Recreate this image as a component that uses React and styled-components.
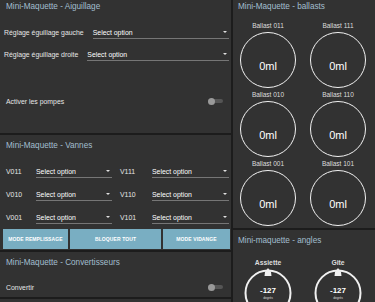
import React from "react";
import styled, { createGlobalStyle } from "styled-components";

const Global = createGlobalStyle`
  html, body { margin: 0; padding: 0; background: #1c1c1c; }
  body { font-family: "Liberation Sans", Arial, sans-serif; }
`;

const Page = styled.div`
  width: 375px;
  height: 302px;
  overflow: hidden;
  background: #1c1c1c;
`;

const Columns = styled.div`
  display: flex;
  gap: 2px;
  margin-top: -4px;
  height: 306px;
`;

const Column = styled.div`
  display: flex;
  flex-direction: column;
  gap: 2px;
  width: ${(p) => (p.$w ? `${p.$w}px` : "auto")};
  flex: ${(p) => (p.$w ? "none" : "1")};
`;

const Card = styled.section`
  background: #323232;
  padding: 5px 0 ${(p) => p.$pb || 0}px;
  box-sizing: border-box;
  height: ${(p) => (p.$h ? `${p.$h}px` : "auto")};
  flex: ${(p) => (p.$grow ? "1" : "none")};
`;

const Title = styled.div`
  font-size: 8.2px;
  line-height: 12px;
  color: #a2bfcf;
  padding-left: ${(p) => p.$pl || 6}px;
  white-space: nowrap;
`;

const FieldRow = styled.div`
  display: flex;
  align-items: center;
  height: 14px;
  margin-top: ${(p) => p.$mt || 0}px;
  padding: 0 2px 0 ${(p) => p.$pl || 4}px;
`;

const Label = styled.span`
  font-size: 6.9px;
  color: #e6e6e6;
  white-space: nowrap;
  box-sizing: border-box;
  width: ${(p) => (p.$w ? `${p.$w}px` : "auto")};
  padding-left: ${(p) => p.$pl || 0}px;
  flex: none;
`;

const SelectBox = styled.div`
  display: flex;
  align-items: center;
  justify-content: space-between;
  box-sizing: border-box;
  height: 14px;
  margin-left: ${(p) => p.$ml || 0}px;
  width: ${(p) => (p.$w ? `${p.$w}px` : "auto")};
  flex: ${(p) => (p.$w ? "none" : "1")};
  border-bottom: 1.5px solid #767676;
  font-size: 6.9px;
  color: #ffffff;
  padding-top: 1px;
`;

const Arrow = styled.span`
  width: 0;
  height: 0;
  border-left: 2px solid transparent;
  border-right: 2px solid transparent;
  border-top: 2.5px solid #e0e0e0;
  margin-right: 2px;
`;

const SwitchRow = styled.div`
  display: flex;
  align-items: center;
  justify-content: space-between;
  height: 14px;
  margin-top: ${(p) => p.$mt || 0}px;
  padding: 0 8px 0 6px;
`;

const Track = styled.div`
  width: 15px;
  height: 4px;
  border-radius: 2px;
  background: #555555;
  display: flex;
  align-items: center;
`;

const Knob = styled.div`
  width: 7px;
  height: 7px;
  border-radius: 50%;
  background: #999999;
  flex: none;
`;

const ButtonRow = styled.div`
  display: flex;
  gap: 2px;
  padding-left: 3px;
  margin-top: 5px;
`;

const ActionButton = styled.button`
  width: ${(p) => p.$w}px;
  height: 20px;
  border: none;
  padding: 0;
  background: #79aec2;
  color: #ffffff;
  font-family: "Liberation Sans", Arial, sans-serif;
  font-size: 5px;
  font-weight: 700;
  letter-spacing: 0.1px;
  text-transform: uppercase;
  display: flex;
  align-items: center;
  justify-content: center;
`;

const TwoGrid = styled.div`
  display: grid;
  grid-template-columns: 70px 70px;
  row-gap: 2px;
  margin-top: ${(p) => p.$mt || 0}px;
`;

const Cell = styled.div`
  display: flex;
  flex-direction: column;
  align-items: center;
`;

const SmallLabel = styled.div`
  font-size: ${(p) => p.$fs || 6.5}px;
  font-weight: ${(p) => p.$fw || 400};
  line-height: 10px;
  color: #dddddd;
  white-space: nowrap;
`;

const Ring = styled.div`
  width: 56px;
  height: 56px;
  margin-top: 1px;
  box-sizing: border-box;
  border: 1.5px solid #f2f2f2;
  border-radius: 50%;
  display: flex;
  align-items: center;
  justify-content: center;
  padding-top: 12px;
  font-size: 11px;
  color: #ffffff;
`;

const GaugeSvg = styled.svg`
  display: block;
  overflow: visible;
`;

const Select = ({ w, ml }) => (
  <SelectBox $w={w} $ml={ml}>
    <span>Select option</span>
    <Arrow />
  </SelectBox>
);

const Toggle = () => (
  <Track>
    <Knob />
  </Track>
);

const Gauge = ({ label }) => (
  <Cell>
    <SmallLabel $fs={6.8} $fw={700}>{label}</SmallLabel>
    <GaugeSvg width="56" height="40" viewBox="0 0 56 40">
      <circle cx="28" cy="25" r="22.5" fill="none" stroke="#f0f0f0" strokeWidth="2" />
      <polygon points="28,0 31,4 31.5,8 24.5,8 25,4" fill="#f0f0f0" />
      <text
        x="28"
        y="25"
        textAnchor="middle"
        fill="#ffffff"
        fontSize="8"
        fontWeight="700"
        fontFamily="Liberation Sans, Arial, sans-serif"
      >
        -127
      </text>
      <text
        x="28"
        y="30.5"
        textAnchor="middle"
        fill="#dddddd"
        fontSize="3.2"
        fontFamily="Liberation Sans, Arial, sans-serif"
      >
        degrés
      </text>
    </GaugeSvg>
  </Cell>
);

const valves = [
  ["V011", "V111"],
  ["V010", "V110"],
  ["V001", "V101"],
];

const ballasts = ["011", "111", "010", "110", "001", "101"];

export default function App() {
  return (
    <Page>
      <Global />
      <Columns>
        <Column $w={231}>
          <Card $h={137}>
            <Title>Mini-Maquette - Aiguillage</Title>
            <FieldRow $mt={12}>
              <Label>Réglage éguillage gauche</Label>
              <Select ml={9} />
            </FieldRow>
            <FieldRow $mt={8}>
              <Label>Réglage éguillage droite</Label>
              <Select ml={9} />
            </FieldRow>
            <SwitchRow $mt={33}>
              <Label>Activer les pompes</Label>
              <Toggle />
            </SwitchRow>
          </Card>

          <Card $pb={1}>
            <Title>Mini-Maquette - Vannes</Title>
            {valves.map(([a, b], i) => (
              <FieldRow key={a} $mt={i === 0 ? 12 : 9} $pl={6}>
                <Label $w={30}>{a}</Label>
                <Select w={76} />
                <Label $w={40} $pl={8}>
                  {b}
                </Label>
                <Select w={77} />
              </FieldRow>
            ))}
            <ButtonRow>
              <ActionButton $w={65}>Mode remplissage</ActionButton>
              <ActionButton $w={91}>Bloquer tout</ActionButton>
              <ActionButton $w={67}>Mode vidange</ActionButton>
            </ButtonRow>
          </Card>

          <Card $h={45}>
            <Title>Mini-Maquette - Convertisseurs</Title>
            <SwitchRow $mt={11}>
              <Label>Convertir</Label>
              <Toggle />
            </SwitchRow>
          </Card>

          <Card $grow />
        </Column>

        <Column>
          <Card $pb={2}>
            <Title $pl={5}>Mini-Maquette - ballasts</Title>
            <TwoGrid $mt={8}>
              {ballasts.map((b) => (
                <Cell key={b}>
                  <SmallLabel>Ballast {b}</SmallLabel>
                  <Ring>0ml</Ring>
                </Cell>
              ))}
            </TwoGrid>
          </Card>
          <Card $grow>
            <Title $pl={5}>Mini-maquette - angles</Title>
            <TwoGrid $mt={11}>
              <Gauge label="Assiette" />
              <Gauge label="Gite" />
            </TwoGrid>
          </Card>
        </Column>
      </Columns>
    </Page>
  );
}
